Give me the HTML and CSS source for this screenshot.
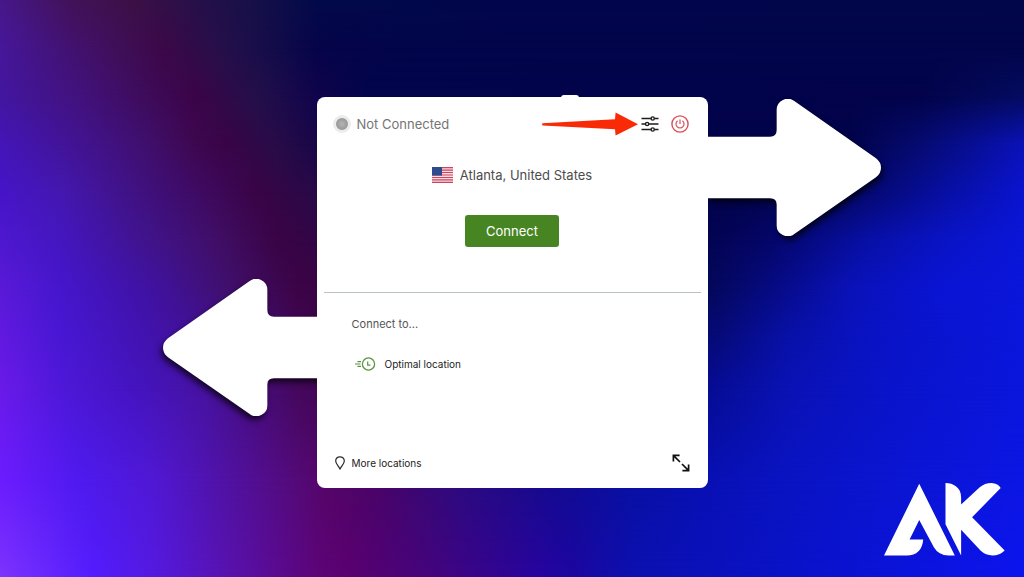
FILE: index.html
```html
<!DOCTYPE html>
<html lang="en">
  <head>
    <meta charset="UTF-8" />
    <meta name="viewport" content="width=device-width, initial-scale=1.0" />
    <title>VPN Connection</title>
    <link rel="stylesheet" href="styles.css">
  </head>
  <body>
    <div class="backdrop" aria-hidden="true">
      <div class="band band-1"></div>
      <div class="band band-2"></div>
      <div class="band band-3"></div>
      <div class="band band-4"></div>
      <div class="band band-5"></div>
      <div class="band band-6"></div>
      <div class="band band-7"></div>
      <div class="band band-8"></div>
      <div class="band band-9"></div>
      <div class="band band-10"></div>
      <div class="band band-11"></div>
    </div>

    <main class="stage">
      <div class="card-wrap">
        <svg class="big-arrow arrow-right" viewBox="24 57 519 411" aria-hidden="true">
          <path d="M0 170H210Q230 170 230 150V90A33 33 0 0 1 284 64L528 235Q543 247 543 263Q543 280 528 292L284 461A33 33 0 0 1 230 434V374Q230 355 210 355H0Z" />
        </svg>
        <svg class="big-arrow arrow-left" viewBox="24 57 519 411" aria-hidden="true">
          <path d="M0 170H210Q230 170 230 150V90A33 33 0 0 1 284 64L528 235Q543 247 543 263Q543 280 528 292L284 461A33 33 0 0 1 230 434V374Q230 355 210 355H0Z" />
        </svg>
        <span class="notch"></span>

        <section class="card">
          <div class="card-top">
            <header class="card-header">
              <span class="status-dot"></span>
              <span class="status">Not Connected</span>
              <button class="icon-button" type="button" aria-label="Settings">
                <svg width="18" height="18" viewBox="0 0 18 18" fill="none" stroke="#1c1c1c" stroke-width="1.4">
                  <path d="M0.5 3.5H10M13.4 3.5H17.5M0.5 9H4.4M7.8 9H17.5M0.5 14.5H10M13.4 14.5H17.5" />
                  <circle cx="11.7" cy="3.5" r="1.6" />
                  <circle cx="6.1" cy="9" r="1.6" />
                  <circle cx="11.7" cy="14.5" r="1.6" />
                </svg>
              </button>
              <button class="icon-button" type="button" aria-label="Quit">
                <svg width="18" height="18" viewBox="0 0 18 18" fill="none" stroke="#d9505c">
                  <circle cx="9" cy="9" r="8.1" stroke-width="1.4" />
                  <path d="M6.6 5.8A4 4 0 1 0 11.4 5.8M9 4.4V9" stroke-width="1.2" />
                </svg>
              </button>
            </header>

            <div class="location">
              <svg width="21" height="16" viewBox="0 0 21 16" aria-hidden="true">
                <path fill="#f6dde2" d="M0 0H21V16H0Z" />
                <path stroke="#cf4560" stroke-width="1.23" d="M0 .6H21M0 3.1H21M0 5.5H21M0 8H21M0 10.5H21M0 12.9H21M0 15.4H21" />
                <path fill="#2d4a8c" d="M0 0H10V8.6H0Z" />
              </svg>
              <span>Atlanta, United States</span>
            </div>

            <button class="connect" type="button">Connect</button>
          </div>

          <div class="card-bottom">
            <h2 class="list-title">Connect to...</h2>
            <button class="row-button optimal" type="button">
              <svg width="22" height="14" viewBox="0 0 22 14" fill="none" stroke="#5c9440" aria-hidden="true">
                <circle cx="14.5" cy="7" r="6.1" stroke-width="1.3" />
                <path stroke-width="1.2" d="M13.7 4.4V8.2H16.4M3.4 4.6H7M1 7H6.4M3.4 9.4H7" />
              </svg>
              Optimal location
            </button>

            <footer class="card-footer">
              <button class="row-button more" type="button">
                <svg width="10" height="14" viewBox="0 0 10 14" fill="none" stroke="#2a2a2a" stroke-width="1.2" aria-hidden="true">
                  <path d="M5 .8C2.4.8.7 2.6.7 4.9C.7 7.6 3.3 9.8 5 13C6.7 9.8 9.3 7.6 9.3 4.9C9.3 2.6 7.6.8 5 .8Z" />
                </svg>
                More locations
              </button>
              <button class="icon-button" type="button" aria-label="Expand">
                <svg width="18" height="18" viewBox="0 0 18 18" fill="none" stroke="#111" stroke-width="1.7">
                  <path d="M1.4 7.6V1.4H7.6M1.6 1.6L8 8M10 10L16.4 16.4M16.6 10.4V16.6H10.4" />
                </svg>
              </button>
            </footer>
          </div>
        </section>

        <svg class="pointer" viewBox="0 0 96 24" aria-hidden="true">
          <path fill="#f92a06" d="M.6 11.3L73 7.2L73.6 .4L96 12.2L73.6 23.6L73 17.2L.6 13.4Q-.4 12.4 .6 11.3Z" />
        </svg>
      </div>
    </main>

    <svg class="logo" viewBox="42 39 364 219" role="img" aria-label="Logo">
      <path d="M148 41L255 257H236Q206 256 192 232L148 150L119 209H160Q156 257 110 257H42Z" />
      <path d="M227 39C250 39 274 52 274 82V104L330 52Q345 39 365 39Q386 40 393 54L307 142L405 242Q390 257 368 257Q348 257 333 243L274 180V257L227 163Z" />
    </svg>
  </body>
</html>
```

FILE: styles.css
```css
* {
  box-sizing: border-box;
}
body {
  margin: 0;
  min-height: 100vh;
  background-color: #02064c;
  font-family: Inter, "Liberation Sans", sans-serif;
  overflow: hidden;
}
button {
  font-family: inherit;
  border: none;
  background: none;
  padding: 0;
  cursor: pointer;
}
svg {
  display: block;
}

/* Backdrop: horizontal gradients that fade into each other down the page */
.backdrop {
  position: fixed;
  inset: 0;
  z-index: -1;
}
.band {
  position: absolute;
  inset: 0;
}
.band-1 {
  background: linear-gradient(90deg, #46188a 0%, #421258 7%, #3c1046 13%, #24104a 20%, #161048 25%, #020a4a 31%, #02064c 50%, #02064a 100%);
}
.band-2 {
  background: linear-gradient(90deg, #46179a 0%, #421270 7%, #3f0f56 12%, #3c0848 16%, #24104a 22%, #120c4a 27%, #06044a 31%, #02054a 40%, #02054a 100%);
  mask-image: linear-gradient(transparent 0%, #000 8.33%);
}
.band-3 {
  background: linear-gradient(90deg, #4216a0 0%, #42127c 8%, #3e0c5c 14%, #3c0448 19%, #24104a 25%, #10044c 31%, #02054c 36%, #02034a 90%, #040c60 100%);
  mask-image: linear-gradient(transparent 8.33%, #000 16.67%);
}
.band-4 {
  background: linear-gradient(90deg, #4416b8 0%, #42149a 6%, #401070 14%, #3e0850 19%, #3a0448 22%, #280c48 27%, #140648 32%, #02034a 40%, #02034a 83%, #060c78 91%, #0a12b8 100%);
  mask-image: linear-gradient(transparent 16.67%, #000 25%);
}
.band-5 {
  background: linear-gradient(90deg, #4614c8 0%, #4418b0 6%, #401284 13%, #3e0a60 20%, #3a0446 25%, #280a48 31%, #02034a 50%, #02034a 72%, #04065e 82%, #0810a8 93%, #0a14d0 100%);
  mask-image: linear-gradient(transparent 25%, #000 33.33%);
}
.band-6 {
  background: linear-gradient(90deg, #4e18d0 0%, #4416c0 6%, #40148e 14%, #400f68 21%, #3a0446 27%, #300646 32%, #03034a 50%, #03034e 68%, #040668 75%, #0810a8 85%, #0a14c8 93%, #0a16d8 100%);
  mask-image: linear-gradient(transparent 33.33%, #000 41.67%);
}
.band-7 {
  background: linear-gradient(90deg, #5a1ad8 0%, #4416cc 6%, #4012a0 15%, #40106e 22%, #3c0446 29%, #380446 33%, #040450 60%, #040858 69%, #060a80 75%, #0a12b8 83%, #0a14d4 92%, #0a16da 100%);
  mask-image: linear-gradient(transparent 41.67%, #000 50%);
}
.band-8 {
  background: linear-gradient(90deg, #6219e0 0%, #4817d4 6%, #4213b0 14%, #42108a 22%, #3f0448 31%, #300448 36%, #040868 60%, #060a78 70%, #0811a8 77%, #0a13c4 85%, #0a16dc 100%);
  mask-image: linear-gradient(transparent 50%, #000 58.33%);
}
.band-9 {
  background: linear-gradient(90deg, #6a1ae8 0%, #4e18d8 6%, #4414c0 13%, #4612a0 20%, #44085c 29%, #400450 33%, #060c80 60%, #060c90 69%, #0a12b4 77%, #0a14cc 88%, #0a16dc 100%);
  mask-image: linear-gradient(transparent 58.33%, #000 66.67%);
}
.band-10 {
  background: linear-gradient(90deg, #6c1cfe 0%, #4e1aee 8%, #5018d4 15%, #5012a4 22%, #540a78 29%, #560568 32%, #480468 37%, #2c0a80 45%, #140a90 54%, #0810a4 62%, #0810b4 69%, #0a14c4 78%, #0c16e4 100%);
  mask-image: linear-gradient(transparent 66.67%, #000 83.33%);
}
.band-11 {
  background: linear-gradient(90deg, #7c34fc 0%, #541cfe 9%, #541ae0 15%, #5812b0 22%, #5c0478 31%, #5a0070 34%, #44047c 42%, #2604a0 53%, #1c06a0 56%, #0c10b0 62%, #0a12c4 75%, #0c14ee 100%);
  mask-image: linear-gradient(transparent 83.33%, #000 100%);
}

.stage {
  min-height: 100vh;
  display: flex;
  align-items: center;
  justify-content: center;
  padding-top: 8px;
}
.card-wrap {
  position: relative;
  isolation: isolate;
  width: 100%;
  max-width: 391px;
}

/* Arrows behind the card */
.big-arrow {
  position: absolute;
  z-index: -1;
  width: 173px;
  fill: #fff;
  filter: drop-shadow(2px 4px 3px rgba(0, 0, 0, 0.7));
}
.arrow-right {
  left: 100%;
  top: 2px;
}
.arrow-left {
  left: -154px;
  top: 182px;
  transform: scaleX(-1);
}
.notch {
  position: absolute;
  z-index: -1;
  top: -2px;
  left: 244px;
  width: 18px;
  height: 6px;
  border-radius: 3px;
  background: #fff;
}
.pointer {
  position: absolute;
  top: 15px;
  right: 70px;
  width: 96px;
}

.card {
  background: #fff;
  border-radius: 8px;
}
.card-top {
  margin: 0 7px;
  padding: 17px 9px 45px;
  border-bottom: 1px solid #b8c2c2;
}
.card-header {
  display: flex;
  align-items: center;
  gap: 12px;
  height: 20px;
  padding-right: 3px;
}
.status-dot {
  width: 18px;
  height: 18px;
  border: 3px solid #ececec;
  border-radius: 50%;
  background: radial-gradient(#b4b4b4, #8c8c8c);
}
.status {
  margin: 0 auto 0 -6px;
  font-size: 13px;
  line-height: 20px;
  color: #757575;
}
.location {
  display: flex;
  align-items: center;
  justify-content: center;
  gap: 7px;
  margin: 31px 0 30px;
  font-size: 13px;
  line-height: 20px;
  color: #4c4c4c;
}
.connect {
  display: block;
  margin: 0 auto;
  padding: 6px 21px;
  border-radius: 3px;
  background: #478523;
  color: #fff;
  font-size: 13px;
  line-height: 20px;
}

.card-bottom {
  padding: 21px 18px 15px;
}
.list-title {
  margin: 0 0 20px 17px;
  font-size: 11px;
  font-weight: 400;
  line-height: 20px;
  color: #555;
}
.row-button {
  display: flex;
  align-items: center;
  font-size: 10px;
  line-height: 20px;
  color: #1c1c1c;
}
.optimal {
  gap: 9px;
  margin-left: 19px;
}
.more {
  gap: 7px;
}
.card-footer {
  display: flex;
  align-items: center;
  justify-content: space-between;
  margin-top: 79px;
}

.logo {
  position: fixed;
  right: 19px;
  bottom: 21px;
  width: 121px;
  fill: #fff;
}
```
